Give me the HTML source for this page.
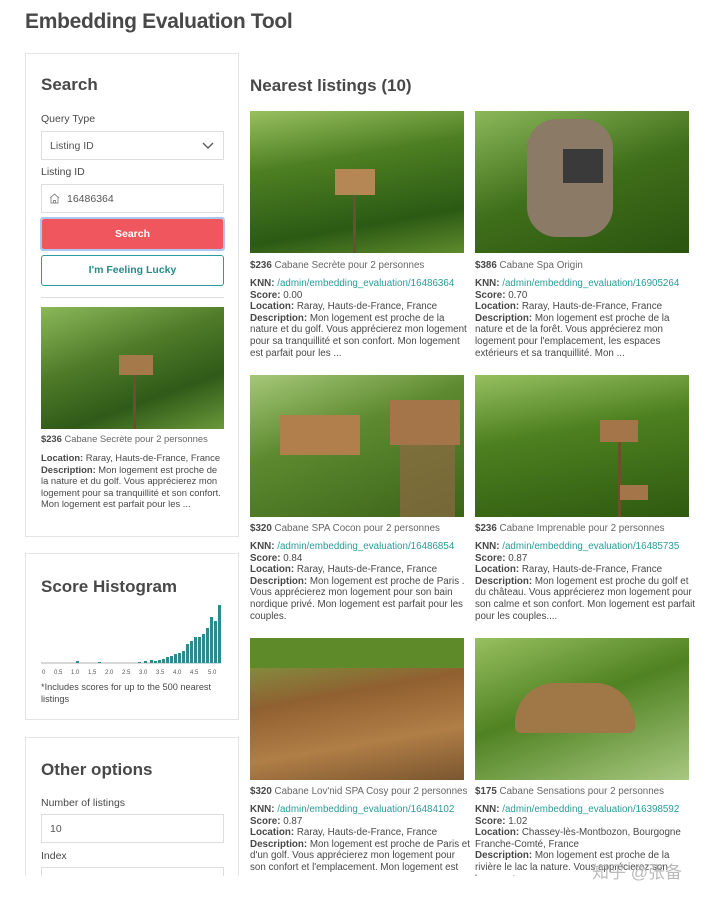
<!DOCTYPE html>
<html><head><meta charset="utf-8"><style>
*{margin:0;padding:0;box-sizing:border-box}
body{width:720px;height:899px;background:#fff;font-family:"Liberation Sans",sans-serif;color:#484848;position:relative;overflow:hidden}
.a{position:absolute}
h1{position:absolute;left:25px;top:10px;font-size:21px;font-weight:bold;color:#484848;letter-spacing:-0.3px}
.panel{position:absolute;left:25px;width:214px;border:1px solid #e4e4e4;background:#fff}
.h2{position:absolute;font-size:17px;font-weight:bold;color:#484848}
.lbl{position:absolute;left:41px;font-size:10.5px;color:#484848}
.inp{position:absolute;left:41px;width:183px;height:29px;border:1px solid #ddd;font-size:10.5px;color:#555;padding:8px 0 0 8px}
.img{position:absolute;overflow:hidden}
.t{position:absolute;font-size:9.8px;line-height:11.6px;color:#484848;width:220px}
.t b{color:#484848}
.nw{white-space:nowrap}
.k{color:#2a9a9a}
.ttl{color:#666}
</style></head><body>
<h1>Embedding Evaluation Tool</h1>

<div class="panel" style="top:53px;height:484px"></div>
<div class="h2" style="left:41px;top:75px">Search</div>
<div class="lbl" style="top:113px">Query Type</div>
<div class="inp" style="top:131px">Listing ID<svg class="a" style="left:160px;top:10px" width="12" height="8"><path d="M1 1 L6 6 L11 1" fill="none" stroke="#555" stroke-width="1.3"/></svg></div>
<div class="lbl" style="top:166px">Listing ID</div>
<div class="inp" style="top:184px;padding-left:25px">16486364<svg class="a" style="left:7px;top:8px" width="11" height="11"><path d="M1 5 L5.5 1 L10 5 M2 4.5 V10 H9 V4.5 M4.5 10 V7.5 H6.5 V10" fill="none" stroke="#888" stroke-width="0.9"/></svg></div>
<div class="a" style="left:40px;top:217px;width:185px;height:34px;border:2px solid #a9c7ef;border-radius:3px"></div>
<div class="a" style="left:42px;top:219px;width:181px;height:30px;background:#f0565d;border-radius:2px;color:#fff;font-size:10.5px;font-weight:bold;text-align:center;line-height:30px">Search</div>
<div class="a" style="left:41px;top:255px;width:183px;height:31px;border:1.5px solid #2a9a9a;border-radius:3px;color:#2a8a8a;font-size:10.5px;font-weight:bold;text-align:center;line-height:28px">I'm Feeling Lucky</div>
<div class="a" style="left:41px;top:297px;width:183px;height:1px;background:#ddd"></div>
<div class="img" style="left:41px;top:307px;width:183px;height:122px;background:linear-gradient(160deg,#8cb85a,#4e7a28 40%,#2f5a18 70%,#6a983a)"><div class="a" style="left:78px;top:48px;width:34px;height:20px;background:#a57a4a"></div><div class="a" style="left:92px;top:68px;width:3px;height:54px;background:#6b5030"></div></div>
<div class="t nw" style="left:41px;top:433px;font-size:9.4px"><b>$236</b> <span class="ttl">Cabane Secrète pour 2 personnes</span></div>
<div class="t" style="left:41px;top:452px;width:186px;font-size:9.4px"><span class="nw"><b>Location:</b> Raray, Hauts-de-France, France</span><br><b>Description:</b> Mon logement est proche de la nature et du golf. Vous apprécierez mon logement pour sa tranquillité et son confort. Mon logement est parfait pour les ...</div>

<div class="panel" style="top:553px;height:167px"></div>
<div class="h2" style="left:41px;top:577px">Score Histogram</div>
<svg class="a" style="left:38px;top:605px" width="186" height="70">
<line x1="3" y1="58" x2="183" y2="58" stroke="#999" stroke-width="0.7"/>
<g fill="#2e8b8b">
<rect x="112" y="55" width="3" height="3"/><rect x="116" y="56" width="3" height="2"/><rect x="120" y="55" width="3" height="3"/><rect x="124" y="54" width="3" height="4"/><rect x="128" y="52" width="3" height="6"/><rect x="132" y="51" width="3" height="7"/><rect x="136" y="49" width="3" height="9"/><rect x="140" y="48" width="3" height="10"/><rect x="144" y="46" width="3" height="12"/><rect x="148" y="39" width="3" height="19"/><rect x="152" y="36" width="3" height="22"/><rect x="156" y="32" width="3" height="26"/><rect x="160" y="32" width="3" height="26"/><rect x="164" y="29" width="3" height="29"/><rect x="168" y="23" width="3" height="35"/><rect x="172" y="12" width="3" height="46"/><rect x="176" y="16" width="3" height="42"/><rect x="180" y="0" width="3" height="58"/>
<rect x="38" y="56" width="3" height="2"/><rect x="60" y="57" width="3" height="1"/><rect x="100" y="57" width="3" height="1"/><rect x="106" y="56" width="3" height="2"/>
</g>
<g font-size="6" fill="#555" font-family="Liberation Sans">
<text x="4" y="69">0</text><text x="16" y="69">0.5</text><text x="33" y="69">1.0</text><text x="50" y="69">1.5</text><text x="67" y="69">2.0</text><text x="84" y="69">2.5</text><text x="101" y="69">3.0</text><text x="118" y="69">3.5</text><text x="135" y="69">4.0</text><text x="152" y="69">4.5</text><text x="170" y="69">5.0</text>
</g></svg>
<div class="t" style="left:41px;top:682px;width:185px;font-size:9.2px">*Includes scores for up to the 500 nearest listings</div>

<div class="panel" style="top:737px;height:140px;border-bottom:none"></div>
<div class="h2" style="left:41px;top:760px">Other options</div>
<div class="lbl" style="top:797px">Number of listings</div>
<div class="inp" style="top:814px">10</div>
<div class="lbl" style="top:850px">Index</div>
<div class="inp" style="top:867px;height:9px;border-bottom:none"></div>

<div class="h2" style="left:250px;top:76px">Nearest listings (10)</div>

<div class="img" style="left:250px;top:111px;width:214px;height:142px;background:linear-gradient(170deg,#98c060,#4d7f22 35%,#2b5a14 75%,#5f8a2c)"><div class="a" style="left:85px;top:58px;width:40px;height:26px;background:#b48755"></div><div class="a" style="left:103px;top:84px;width:3px;height:58px;background:#6b5030"></div></div>
<div class="img" style="left:475px;top:111px;width:214px;height:142px;background:linear-gradient(160deg,#8cb85a,#3f6f1a 50%,#2a5410)"><div class="a" style="left:52px;top:8px;width:86px;height:118px;background:#8a7a66;border-radius:30px"></div><div class="a" style="left:88px;top:38px;width:40px;height:34px;background:#3a3a3a"></div></div>
<div class="t nw" style="left:250px;top:260px"><b>$236</b> <span class="ttl">Cabane Secrète pour 2 personnes</span></div>
<div class="t" style="left:250px;top:278px"><b>KNN:</b> <span class="k">/admin/embedding_evaluation/16486364</span><br><b>Score:</b> 0.00<br><b>Location:</b> Raray, Hauts-de-France, France<br><b>Description:</b> Mon logement est proche de la nature et du golf. Vous apprécierez mon logement pour sa tranquillité et son confort. Mon logement est parfait pour les ...</div>
<div class="t nw" style="left:475px;top:260px"><b>$386</b> <span class="ttl">Cabane Spa Origin</span></div>
<div class="t" style="left:475px;top:278px"><b>KNN:</b> <span class="k">/admin/embedding_evaluation/16905264</span><br><b>Score:</b> 0.70<br><b>Location:</b> Raray, Hauts-de-France, France<br><b>Description:</b> Mon logement est proche de la nature et de la forêt. Vous apprécierez mon logement pour l'emplacement, les espaces extérieurs et sa tranquillité. Mon ...</div>

<div class="img" style="left:250px;top:375px;width:214px;height:142px;background:linear-gradient(160deg,#a6c878,#5d8a30 40%,#3b6418)"><div class="a" style="left:30px;top:40px;width:80px;height:40px;background:#b07f4c"></div><div class="a" style="left:140px;top:25px;width:70px;height:45px;background:#a47548"></div><div class="a" style="left:150px;top:70px;width:55px;height:72px;background:#8e6a44;opacity:.7"></div></div>
<div class="img" style="left:475px;top:375px;width:214px;height:142px;background:linear-gradient(170deg,#96c060,#4d8020 40%,#2e5a10)"><div class="a" style="left:125px;top:45px;width:38px;height:22px;background:#a47548"></div><div class="a" style="left:143px;top:67px;width:3px;height:75px;background:#6b5030"></div><div class="a" style="left:145px;top:110px;width:28px;height:15px;background:#a47548"></div></div>
<div class="t nw" style="left:250px;top:523px"><b>$320</b> <span class="ttl">Cabane SPA Cocon pour 2 personnes</span></div>
<div class="t" style="left:250px;top:541px"><b>KNN:</b> <span class="k">/admin/embedding_evaluation/16486854</span><br><b>Score:</b> 0.84<br><b>Location:</b> Raray, Hauts-de-France, France<br><b>Description:</b> Mon logement est proche de Paris . Vous apprécierez mon logement pour son bain nordique privé. Mon logement est parfait pour les couples.</div>
<div class="t nw" style="left:475px;top:523px"><b>$236</b> <span class="ttl">Cabane Imprenable pour 2 personnes</span></div>
<div class="t" style="left:475px;top:541px"><b>KNN:</b> <span class="k">/admin/embedding_evaluation/16485735</span><br><b>Score:</b> 0.87<br><b>Location:</b> Raray, Hauts-de-France, France<br><b>Description:</b> Mon logement est proche du golf et du château. Vous apprécierez mon logement pour son calme et son confort. Mon logement est parfait pour les couples....</div>

<div class="img" style="left:250px;top:638px;width:214px;height:142px;background:linear-gradient(170deg,#7aa848,#906030 40%,#b07e46 70%,#7a5630)"><div class="a" style="left:0;top:0;width:214px;height:30px;background:#5e8a2a"></div></div>
<div class="img" style="left:475px;top:638px;width:214px;height:142px;background:linear-gradient(160deg,#98c060,#4f8222 45%,#a8c880)"><div class="a" style="left:40px;top:45px;width:120px;height:50px;background:#a07848;border-radius:40px 40px 6px 6px"></div></div>
<div class="t nw" style="left:250px;top:786px"><b>$320</b> <span class="ttl">Cabane Lov'nid SPA Cosy pour 2 personnes</span></div>
<div class="t" style="left:250px;top:804px"><b>KNN:</b> <span class="k">/admin/embedding_evaluation/16484102</span><br><b>Score:</b> 0.87<br><b>Location:</b> Raray, Hauts-de-France, France<br><b>Description:</b> Mon logement est proche de Paris et d'un golf. Vous apprécierez mon logement pour son confort et l'emplacement. Mon logement est</div>
<div class="t nw" style="left:475px;top:786px"><b>$175</b> <span class="ttl">Cabane Sensations pour 2 personnes</span></div>
<div class="t" style="left:475px;top:804px"><b>KNN:</b> <span class="k">/admin/embedding_evaluation/16398592</span><br><b>Score:</b> 1.02<br><b>Location:</b> Chassey-lès-Montbozon, Bourgogne Franche-Comté, France<br><b>Description:</b> Mon logement est proche de la rivière le lac la nature. Vous apprécierez son logement</div>
<div class="a" style="left:0;top:876px;width:720px;height:23px;background:#fff"></div>
<div class="a" style="left:592px;top:858px;font-family:'Liberation Sans','Noto Sans CJK SC',sans-serif;font-size:17px;color:#bbb">知乎 @张备</div>
</body></html>
